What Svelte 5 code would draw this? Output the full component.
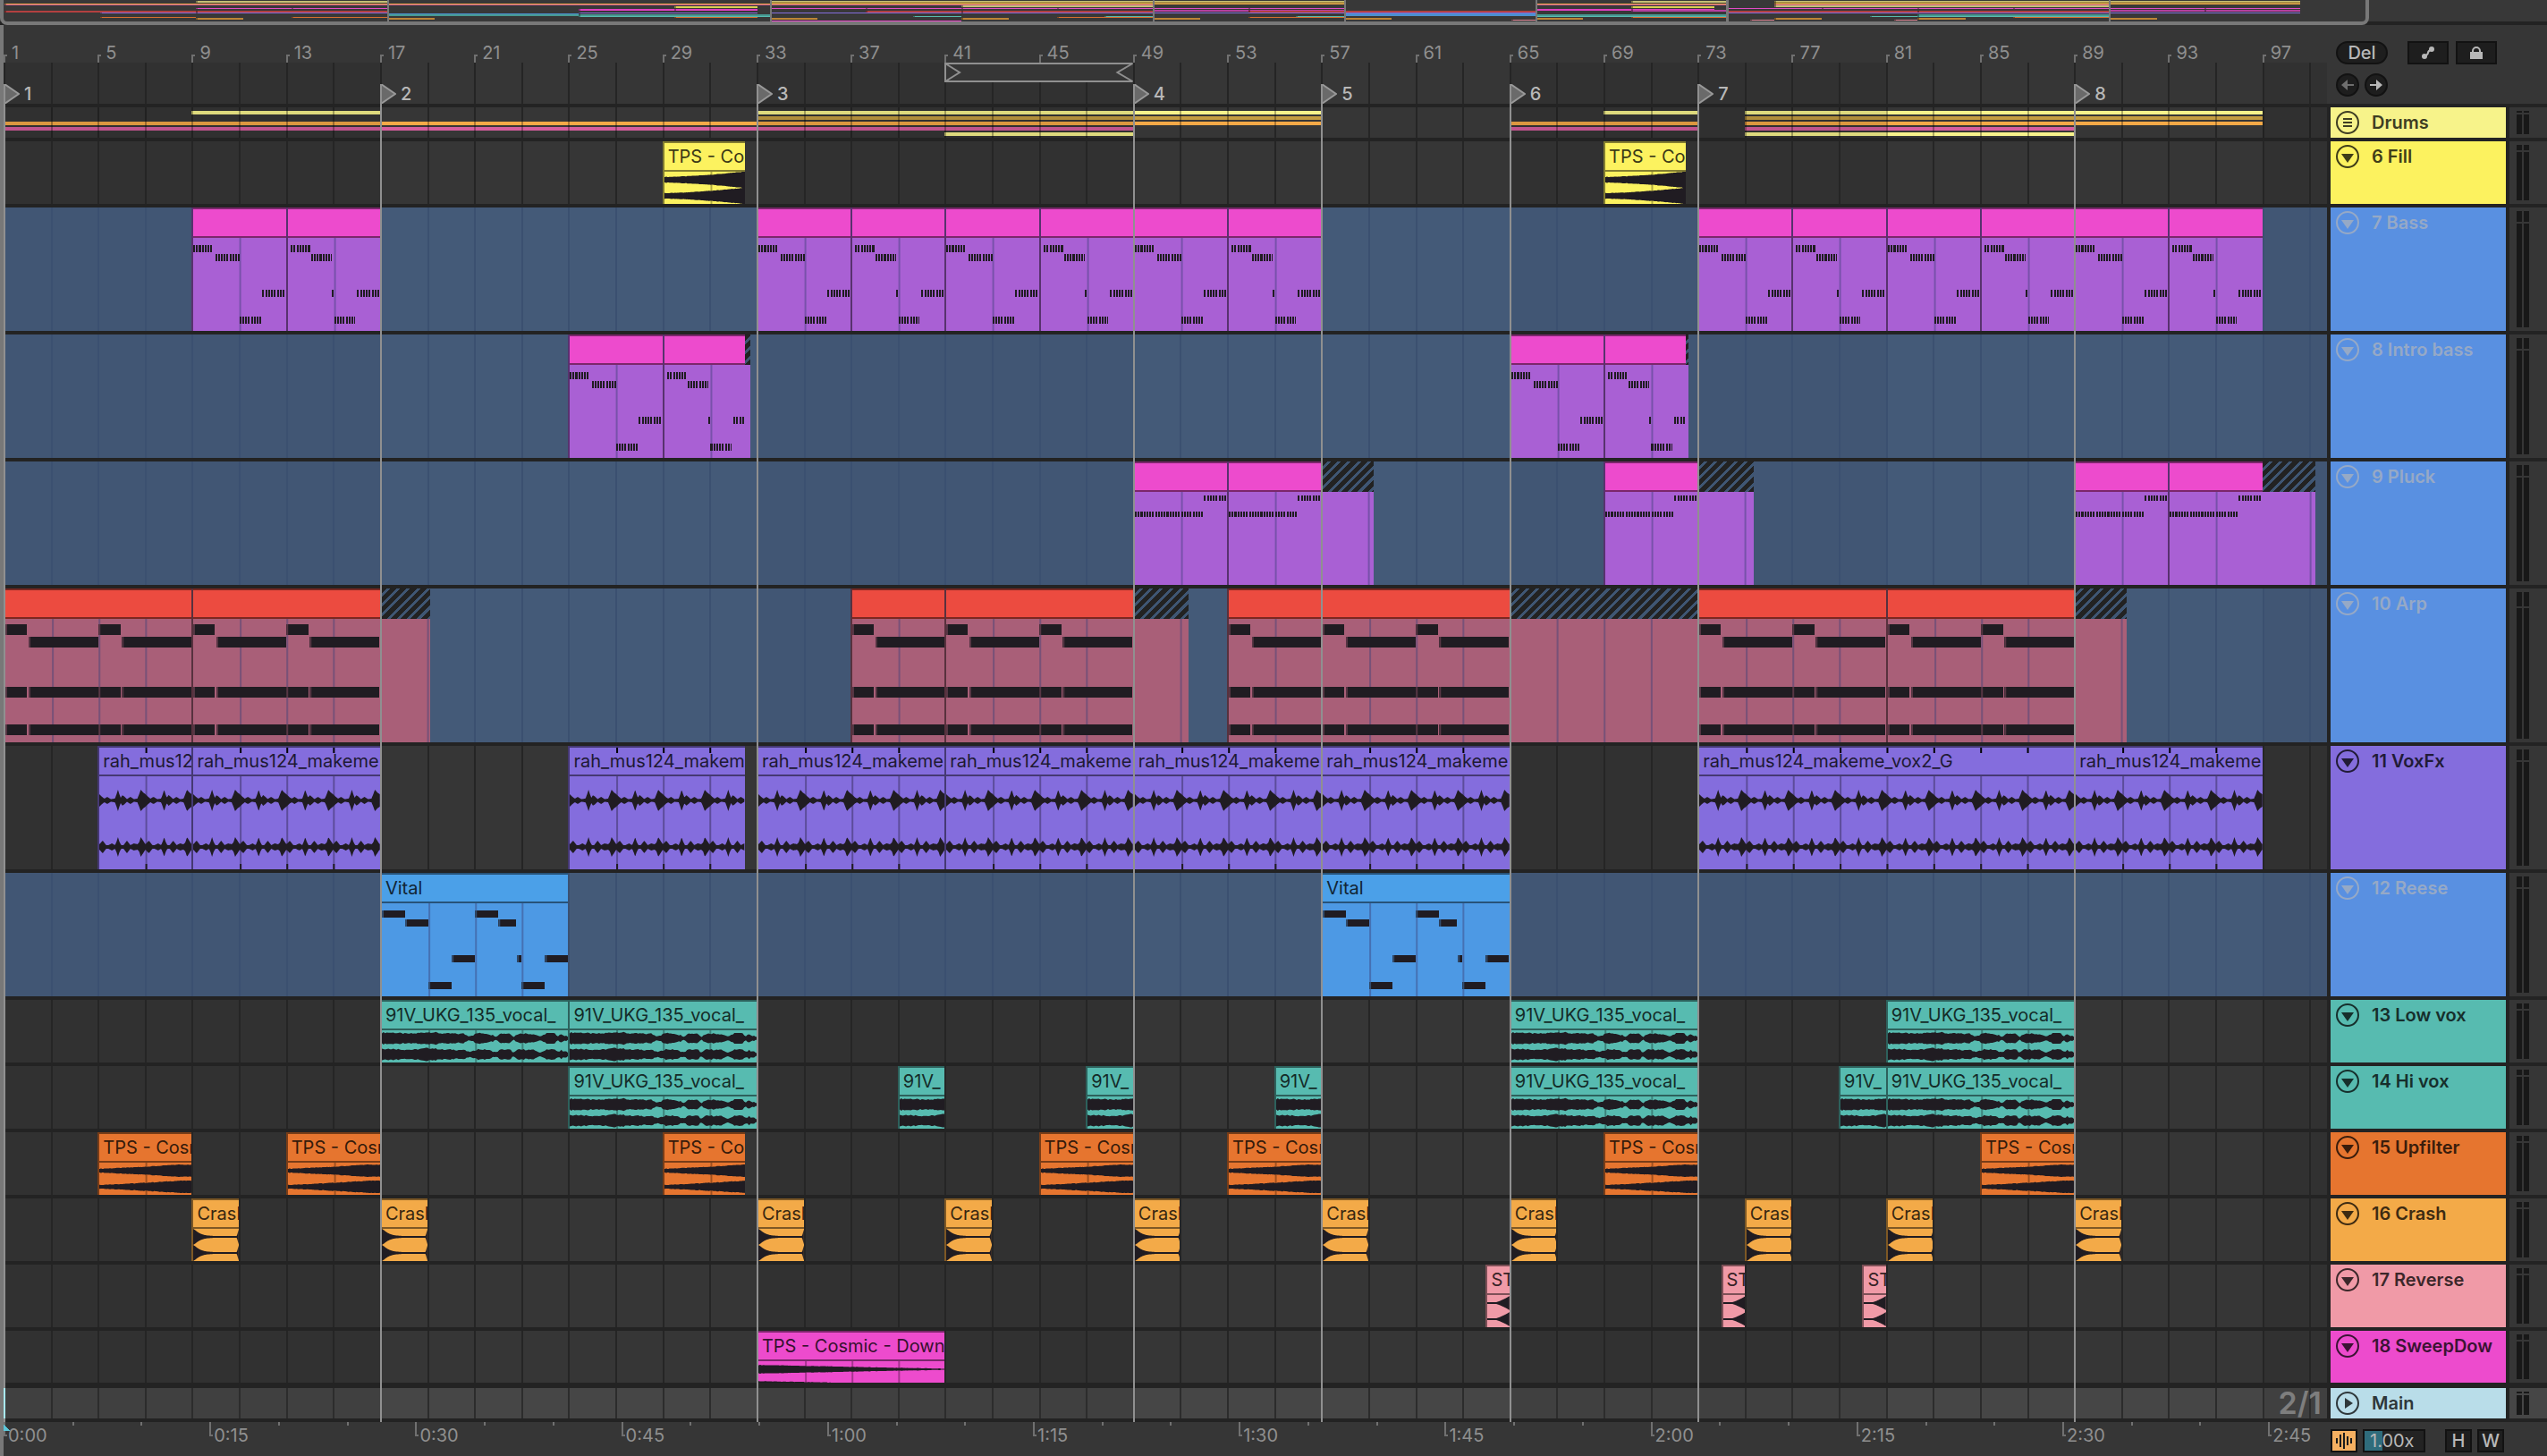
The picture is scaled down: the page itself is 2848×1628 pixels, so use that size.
<script>
  // the timeline is divided in eighths of a bar
  const STEPS = 790;
  const BARS = STEPS / 8;
  const PX = 26.3; // rough width of one bar, only used for line thickness
  const LINE = 2 / PX;

  const locators = [1, 17, 33, 49, 57, 65, 73, 89];
  const rulerBars = Array.from({ length: 25 }, (_, i) => 1 + i * 4);
  const cellBars = Array.from({ length: 50 }, (_, i) => 1 + i * 2);
  const times = Array.from({ length: 12 }, (_, i) => i * 15);

  const PINK = '#ed4bcd';
  const PURPLE = '#a960d4';

  const tracks = [
    { name: '6 Fill', h: 70, color: '#fcf25f', kind: 'fill', meter: 6,
      clips: [[29, 32.5], [69, 72.5]] },
    { name: '7 Bass', h: 138, color: PINK, body: PURPLE, blue: true, kind: 'bass', meter: 12,
      clips: [[9, 13], [13, 17, 1], [33, 37], [37, 41, 1], [41, 45], [45, 49, 1], [49, 53], [53, 57, 1],
        [73, 77], [77, 81, 1], [81, 85], [85, 89, 1], [89, 93], [93, 97, 1]] },
    { name: '8 Intro bass', h: 138, color: PINK, body: PURPLE, blue: true, kind: 'bass', meter: 12,
      clips: [[25, 29], [29, 32.5, 1], [65, 69], [69, 72.5, 1]], tails: [[32.5, 32.75], [72.5, 72.625]] },
    { name: '9 Pluck', h: 138, color: PINK, body: PURPLE, blue: true, kind: 'pluck', meter: 12,
      clips: [[49, 53], [53, 57], [69, 73], [89, 93], [93, 97]], tails: [[57, 59.25], [73, 75.375], [97, 99.25]] },
    { name: '10 Arp', h: 172, color: '#ec4b40', body: '#a95f78', blue: true, kind: 'arp', meter: 16,
      clips: [[1, 9], [9, 17], [37, 41], [41, 49], [53, 57], [57, 65], [73, 81], [81, 89]],
      tails: [[17, 19.125], [49, 51.375], [65, 73], [89, 91.25]] },
    { name: '11 VoxFx', h: 138, color: '#846ddd', kind: 'vox', meter: 12,
      clips: [[5, 9], [9, 17], [25, 32.5], [33, 41], [41, 49], [49, 57], [57, 65], [73, 89], [89, 97]] },
    { name: '12 Reese', h: 138, color: '#4ba0e8', body: '#4d99e4', blue: true, kind: 'reese', meter: 12,
      clips: [[17, 25], [57, 65]] },
    { name: '13 Low vox', h: 70, color: '#57bbb0', kind: 'vocal', meter: 6,
      clips: [[17, 25], [25, 33], [65, 73], [81, 89]] },
    { name: '14 Hi vox', h: 70, color: '#57bbb0', kind: 'vocal', meter: 6,
      clips: [[25, 33], [39, 41], [47, 49], [55, 57], [65, 73], [79, 81], [81, 89]] },
    { name: '15 Upfilter', h: 70, color: '#e6752f', kind: 'up', meter: 6,
      clips: [[5, 9], [13, 17], [29, 32.5], [45, 49], [53, 57], [69, 73], [85, 89]] },
    { name: '16 Crash', h: 70, color: '#f3aa48', kind: 'crash', meter: 6,
      clips: [[9, 11], [17, 19], [33, 35], [41, 43], [49, 51], [57, 59], [65, 67], [75, 77], [81, 83], [89, 91]] },
    { name: '17 Reverse', h: 70, color: '#f09aa7', kind: 'reverse', meter: 6,
      clips: [[64, 65], [74, 75], [80, 81]] },
    { name: '18 SweepDow', h: 58, color: PINK, kind: 'sweep', meter: 6,
      clips: [[33, 41]] }
  ];

  const labels = {
    reese: 'Vital',
    crash: 'Crash',
    reverse: 'ST',
    sweep: 'TPS - Cosmic - Downf'
  };

  // clip names get shorter with the clip
  function label(kind, len) {
    if (kind === 'fill' || kind === 'up') return len < 4 ? 'TPS - Cos' : 'TPS - Cosm';
    if (kind === 'vocal') return len < 4 ? '91V_' : '91V_UKG_135_vocal_';
    if (kind === 'vox') {
      if (len > 8) return 'rah_mus124_makeme_vox2_G';
      return len > 4 ? 'rah_mus124_makeme' : 'rah_mus12';
    }
    return labels[kind] ?? '';
  }

  const drums = [
    { y: 4, color: '#f8f38c', spans: [[9, 17], [33, 57], [69, 73], [75, 97]] },
    { y: 10, color: '#c59d42', spans: [[33, 57], [75, 97]] },
    { y: 16, color: '#f5a947', spans: [[1, 57], [65, 73], [75, 97]] },
    { y: 22, color: '#d65d9e', spans: [[1, 49], [65, 73], [75, 89]] },
    { y: 28, color: '#f8f38c', spans: [[41, 49], [75, 89]] }
  ];

  // rows of the overview strip: y, height, colour, spans
  const overview = [
    [1, 2, '#c5bf74', drums[0].spans],
    [2, 2, '#a98d42', drums[1].spans],
    [4, 1, '#f5a947', drums[2].spans],
    [5, 1, '#c45a95', drums[3].spans],
    [6, 2, '#c5bf74', drums[4].spans],
    [7, 2, '#d8cf52', tracks[0].clips],
    [9, 1, '#e24bc5', tracks[1].clips],
    [10, 2, '#e03fc2', tracks[2].clips],
    [11, 2, '#b53fa0', tracks[3].clips],
    [12, 2, '#b34040', tracks[4].clips],
    [14, 1, '#846ddd', tracks[5].clips],
    [15, 3, '#4b8fd0', tracks[6].clips],
    [16, 2, '#479a92', tracks[7].clips],
    [18, 1, '#57bbb0', tracks[8].clips],
    [19, 1, '#d56f30', tracks[9].clips],
    [20, 2, '#bd8436', tracks[10].clips],
    [22, 1, '#e08a98', tracks[11].clips],
    [23, 1, '#ed4bcd', tracks[12].clips]
  ];

  const bass = [
    [[0, 0.9, 8], [0.95, 2, 18], [2, 3, 88], [3, 4, 58]],
    [[0.12, 1, 8], [1, 1.9, 18], [1.9, 2, 58], [2, 2.9, 88], [3, 4, 58]]
  ];
  const reese = [[0, 1, 8], [1, 2, 18], [2, 3, 88], [3, 4, 58], [4, 5, 8], [5, 5.75, 18], [5.8, 6, 58], [6, 7, 88], [7, 8, 58]];

  function col(a, b) {
    return `grid-column: ${Math.round((a - 1) * 8) + 1} / ${Math.round((b - 1) * 8) + 1}`;
  }

  // short repeated notes between a and b
  function ticks(a, b, y, h) {
    const out = [];
    for (let x = a; x < b - 0.02; x += 0.125) {
      out.push([x, Math.min(0.08, b - x), y, h]);
    }
    return out;
  }

  function notes(kind, len, variant) {
    if (kind === 'bass') {
      return bass[variant].flatMap(([a, b, y]) => ticks(a, b, y, 8));
    }
    if (kind === 'pluck') {
      return [...ticks(0, 3, 22, 6), ...ticks(3, 4, 4, 6)];
    }
    if (kind === 'reese') {
      return reese.map(([a, b, y]) => [a, b - a, y, 8]);
    }
    if (kind === 'arp') {
      const out = [];
      for (let x = 0; x < len; x += 4) {
        out.push([x, 0.94, 6, 12], [x + 1, 3, 20, 12]);
        for (const y of [76, 118]) {
          out.push([x, 0.94, y, 12], [x + 1, 3, y, 12]);
        }
      }
      return out;
    }
    return [];
  }

  const voxA = [[0, 7], [0.12, 4], [0.22, 2], [0.35, 4], [0.5, 1.5], [0.68, 2], [0.75, 7], [0.81, 12], [0.87, 7], [0.93, 3],
    [1, 6], [1.1, 4], [1.2, 1.5], [1.35, 4], [1.5, 1.5], [1.65, 2], [1.73, 7], [1.8, 12], [1.9, 9], [2, 7]];
  const voxB = [[0, 3], [0.15, 7], [0.3, 2], [0.4, 2], [0.55, 4], [0.68, 2], [0.75, 6], [0.81, 11], [0.87, 6], [0.95, 2],
    [1.05, 2], [1.2, 7], [1.35, 2], [1.5, 4], [1.65, 3], [1.73, 5], [1.8, 11], [1.9, 7], [2, 3]];

  function at(points, x) {
    for (let i = 1; i < points.length; i++) {
      if (x <= points[i][0]) {
        const [x0, y0] = points[i - 1];
        const [x1, y1] = points[i];
        return y0 + ((y1 - y0) * (x - x0)) / (x1 - x0);
      }
    }
    return points[points.length - 1][1];
  }

  function noise(i) {
    const v = Math.sin(i * 12.9898) * 43758.5453;
    return v - Math.floor(v);
  }

  const vocalShape = [[0, 6], [0.5, 6], [0.9, 5], [1.4, 5], [1.9, 6.5], [2.2, 6.5], [2.6, 5], [3, 5], [3.3, 4.5], [3.5, 5], [3.7, 2.5],
    [3.9, 3], [4.1, 5.5], [4.5, 5], [4.9, 2], [5.1, 5], [5.5, 5], [5.66, 1.5], [5.85, 5], [6.2, 5], [6.5, 4.5], [6.85, 1.5],
    [7.05, 5.5], [7.4, 5], [7.55, 2.5], [7.7, 4.5], [7.8, 1.5], [7.88, 4], [8, 1]];

  function amp(kind, x, ch) {
    const n = noise(Math.round(x * 13) + ch * 71);
    if (kind === 'vox') return at(ch ? voxB : voxA, x % 2);
    if (kind === 'vocal') return at(vocalShape, x) + n * 1.5 - 0.4;
    if (kind === 'fill') return 3 + (x / 3.5) ** 1.6 * 6 + n * 0.4;
    if (kind === 'up') return Math.min(2 + (x / 3.4) ** 1.3 * 4.4, 6.5) + n * 0.6;
    if (kind === 'crash') return x > 1.93 ? 1 + (x - 1.93) * 90 : 1 + 8 * Math.exp(-((x / 0.3) ** 1.3));
    if (kind === 'reverse') return 1 + 6.5 * Math.max(0, (x - 0.4) / 0.6) ** 1.3;
    return 4.6 - x * 0.52 + n * 0.4;
  }

  function wave(kind, len, ch) {
    const mid = kind === 'vox' ? [27, 79][ch] : [9, 27][ch];
    const step = kind === 'vocal' ? 0.07 : 0.03;
    const up = [];
    const down = [];
    for (let x = 0; x <= len + step; x += step) {
      const a = Math.min(amp(kind, x, ch), kind === 'vox' ? 12 : 9);
      up.push(`${x.toFixed(2)} ${(mid - a).toFixed(1)}`);
      down.unshift(`${x.toFixed(2)} ${(mid + a).toFixed(1)}`);
    }
    return `M${up.join('L')}L${down.join('L')}Z`;
  }

  const audio = ['fill', 'vox', 'vocal', 'up', 'crash', 'reverse', 'sweep'];

  // grid lines that fall inside a clip, relative to its start
  function inner(a, b) {
    return cellBars.filter((n) => n > a && n < b).map((n) => n - a);
  }

  function clock(s) {
    return `${Math.floor(s / 60)}:${String(s % 60).padStart(2, '0')}`;
  }

  let speed = $state('1.00x');
</script>

{#snippet cells()}
  {#each cellBars as bar}
    <i class="cell" class:dim={Math.floor((bar - 1) / 16) % 2 === 0} style={col(bar, Math.min(bar + 2, BARS + 1))}></i>
  {/each}
{/snippet}

{#snippet meter(h)}
  <div class="meter" style="--peak: {h}px">
    <i></i><i></i><i></i><i></i>
  </div>
{/snippet}

{#snippet fold()}
  <svg width="26" height="26" viewBox="0 0 26 26">
    <circle cx="13" cy="13" r="12" fill="none" stroke="currentColor" stroke-width="2" />
    <path d="M6 10h14L13 20z" fill="currentColor" />
  </svg>
{/snippet}

<div class="app">
  <div class="overview">
    <svg class="mini" viewBox="-0.19 0 106.5 24" preserveAspectRatio="none" shape-rendering="crispEdges">
      {#each overview as [y, h, color, spans]}
        {#each spans as [a, b]}
          <rect x={a - 1} {y} width={b - a} height={h} fill={color} />
          <rect x={a - 1} {y} width={LINE} height={h} fill="#000" opacity="0.35" />
        {/each}
      {/each}
      {#each locators.slice(1) as bar}
        <rect x={bar - 1} y="0" width={LINE} height="24" fill="#787878" />
      {/each}
    </svg>
    <div class="frame"></div>
  </div>

  <div class="arrangement">
    <div class="row top">
      <div class="rulers">
        <div class="ruler">
          <svg class="marks" viewBox="0 0 {BARS} 42" preserveAspectRatio="none" shape-rendering="crispEdges">
            {#each rulerBars as bar}
              <rect x={bar - 1} y="30" width={LINE} height="12" />
              <rect x={bar - 1} y="30" width={LINE * 2} height="2" />
              <rect x={bar + 1} y="40" width={LINE} height="2" />
            {/each}
          </svg>
          {#each rulerBars as bar}
            <span class="bar-no" style={col(bar, Math.min(bar + 4, BARS + 1))}>{bar}</span>
          {/each}
        </div>
        <div class="scrub lane">
          {@render cells()}
          <svg class="loop" style={col(41, 49)} width="100%" height="22">
            <rect x="1" y="1" width="100%" height="20" fill="#363636" />
            <path d="M1 1L17 11L1 21" />
            <svg x="100%" overflow="visible"><path d="M0 1L-17 11L0 21" /></svg>
            <rect class="edge" width="100%" height="2" />
            <rect class="edge" y="20" width="100%" height="2" />
            <rect class="edge" width="2" height="22" />
          </svg>
          {#each locators as bar, i}
            <div class="locator" style={col(bar, bar + 6)}>
              <svg width="18" height="22" viewBox="0 0 18 22"><path d="M1 0L17 11L1 22z" fill="#6a6a6a" stroke="#999" stroke-width="2" /></svg>
              <span>{i + 1}</span>
            </div>
          {/each}
        </div>
      </div>
      <div class="controls">
        <div class="line">
          <button class="pill">Del</button>
          <button class="box first" aria-label="Automation mode">
            <svg width="20" height="20" viewBox="0 0 20 20" fill="#b8b8b8">
              <circle cx="6" cy="14" r="3" /><circle cx="14" cy="6" r="3" />
              <path d="M6 14Q10 12 10 10Q10 8 14 6" fill="none" stroke="#b8b8b8" stroke-width="2" />
            </svg>
          </button>
          <button class="box" aria-label="Lock envelopes">
            <svg width="20" height="20" viewBox="0 0 20 20">
              <path d="M3 9h14v8H3z" fill="#b8b8b8" />
              <path d="M6 10V8a4 4 0 0 1 8 0v2" fill="none" stroke="#b8b8b8" stroke-width="2" />
            </svg>
          </button>
        </div>
        <div class="line">
          <button class="round off" aria-label="Previous locator">
            <svg width="16" height="14" viewBox="0 0 16 14"><path d="M8 1v5h7v2H8v5L1 7z" fill="currentColor" /></svg>
          </button>
          <button class="round" aria-label="Next locator">
            <svg width="16" height="14" viewBox="0 0 16 14"><path d="M8 1v5H1v2h7v5l7-6z" fill="currentColor" /></svg>
          </button>
        </div>
      </div>
    </div>

    <div class="row">
      <div class="lane drums">
        <svg class="strips" viewBox="0 0 {BARS} 34" preserveAspectRatio="none" shape-rendering="crispEdges">
          {#each drums as strip}
            {#each strip.spans as [a, b]}
              <rect x={a - 1} y={strip.y} width={b - a} height="4" fill={strip.color} />
            {/each}
          {/each}
        </svg>
        {@render cells()}
      </div>
      <button class="name" style="--color: #f7f38a">
        <svg width="26" height="26" viewBox="0 0 26 26" fill="none" stroke="currentColor" stroke-width="2">
          <circle cx="13" cy="13" r="12" />
          <path d="M8 9h10M8 13h10M8 17h10" />
        </svg>
        Drums
      </button>
      {@render meter(2)}
    </div>

    {#each tracks as track}
      <div class="row">
        <div class="lane" class:blue={track.blue} style="--h: {track.h}px; --color: {track.color}; --body: {track.body ?? track.color}">
          {@render cells()}
          {#each track.clips as [a, b, variant = 0]}
            <div class="clip" style={col(a, b)}>
              <div class="head">
                {#if track.kind === 'vox'}
                  <svg class="warp" viewBox="0 0 {b - a} 6" preserveAspectRatio="none">
                    {#each inner(a, b) as x}
                      <rect {x} y="0" width={LINE} height="6" />
                    {/each}
                  </svg>
                {/if}
                {label(track.kind, b - a)}
              </div>
              <svg class="body" viewBox="0 0 {b - a} {track.h - 34}" preserveAspectRatio="none">
                {#each inner(a, b) as x}
                  <rect class="grid-line" {x} y="0" width={LINE} height={track.h - 34} />
                  {#if track.kind === 'vox'}
                    <rect {x} y="98" width={LINE} height="6" />
                  {/if}
                {/each}
                {#each notes(track.kind, b - a, variant) as [x, w, y, h]}
                  <rect {x} {y} width={w} height={h} shape-rendering="crispEdges" />
                  {#if w > 0.1}
                    <rect class="cut" {x} {y} width={LINE} height={h} />
                  {/if}
                {/each}
                {#if audio.includes(track.kind)}
                  <path d={wave(track.kind, b - a, 0)} />
                  <path d={wave(track.kind, b - a, 1)} />
                {/if}
              </svg>
            </div>
          {/each}
          {#each track.tails ?? [] as [a, b]}
            <div class="clip tail" style={col(a, b)}>
              <div class="hatch"></div>
              <svg class="body" viewBox="0 0 {b - a} {track.h - 34}" preserveAspectRatio="none">
                {#each inner(a, b) as x}
                  <rect class="grid-line" {x} y="0" width={LINE} height={track.h - 34} />
                {/each}
              </svg>
            </div>
          {/each}
        </div>
        <button class="name" class:muted={track.blue} style="--color: {track.blue ? '#5990e1' : track.color}">
          {@render fold()}
          {track.name}
        </button>
        {@render meter(track.meter)}
      </div>
    {/each}

    <div class="row main">
      <div class="lane">
        {@render cells()}
        <i class="start" style={col(1, 2)}></i>
        <span class="fraction">2/1</span>
      </div>
      <button class="name" style="--color: #b9dde9">
        <svg width="26" height="26" viewBox="0 0 26 26">
          <circle cx="13" cy="13" r="12" fill="none" stroke="currentColor" stroke-width="2" />
          <path d="M10 7v12l9-6z" fill="currentColor" />
        </svg>
        Main
      </button>
      {@render meter(2)}
    </div>

    <div class="row bottom">
      <div class="ruler time">
        <svg class="marks" viewBox="0 0 {BARS} 38" preserveAspectRatio="none" shape-rendering="crispEdges">
          {#each times as s}
            <rect x={(s * 7) / 12} y="0" width={LINE} height="16" />
            <rect x={(s * 7) / 12} y="14" width={LINE * 2} height="2" />
            <rect x={((s + 5) * 7) / 12} y="0" width={LINE} height="4" />
            <rect x={((s + 10) * 7) / 12} y="0" width={LINE} height="4" />
          {/each}
          <path class="insert" d="M0 2L0.3 10H0z" />
        </svg>
        {#each times as s, i}
          <span style="grid-column: {i * 70 + 1} / {Math.min(i * 70 + 71, STEPS + 1)}">{clock(s)}</span>
        {/each}
      </div>
      <div class="zoom">
        <button class="wave-btn" aria-label="Optimize waveform">
          <svg width="22" height="20" viewBox="0 0 22 20" stroke="#1c1c1c" stroke-width="2">
            <path d="M3 7v6M7 3v14M11 1v18M15 5v10M19 7v6" />
          </svg>
        </button>
        <input aria-label="Playback speed" bind:value={speed} />
        <button class="fit h">H</button>
        <button class="fit">W</button>
      </div>
    </div>

    <div class="song-lines">
      {#each locators as bar}
        <i style={col(bar, bar + 1)}></i>
      {/each}
    </div>
  </div>
</div>

<style>
  :global(body) {
    margin: 0;
    background: #363636;
  }
  .app {
    font-family: Inter, "Liberation Sans", sans-serif;
    font-size: 20px;
    line-height: 30px;
    background: #363636;
    overflow: hidden;
  }
  button,
  input {
    font: inherit;
    margin: 0;
    padding: 0;
    box-sizing: border-box;
  }
  svg {
    display: block;
    flex: none;
  }

  /* overview */
  .overview {
    position: relative;
    height: 24px;
    border-bottom: 4px solid #232323;
    background: #383838;
  }
  .mini {
    width: 100%;
    height: 24px;
  }
  .frame {
    position: absolute;
    left: 0;
    top: -12px;
    bottom: -4px;
    width: 93%;
    box-sizing: border-box;
    border: 4px solid #787878;
    border-radius: 8px;
  }

  .arrangement {
    position: relative;
    border-left: 4px solid #787878;
    background: #232323;
    display: flex;
    flex-direction: column;
    gap: 4px;
  }
  .row {
    display: grid;
    grid-template-columns: minmax(0, 1fr) 196px 42px;
    column-gap: 4px;
  }
  .row.top,
  .row.bottom {
    grid-template-columns: minmax(0, 1fr) 242px;
    background: #363636;
  }
  .ruler,
  .lane,
  .song-lines {
    display: grid;
    grid-template-columns: repeat(790, minmax(0, 1fr));
  }
  .ruler {
    position: relative;
    height: 42px;
    color: #8f8f8f;
  }
  .marks {
    grid-column: 1 / -1;
    grid-row: 1;
    width: 100%;
    height: 100%;
    fill: #707070;
  }
  .ruler span {
    grid-row: 1;
    white-space: nowrap;
  }
  .bar-no {
    padding: 16px 0 0 9px;
  }

  .lane {
    position: relative;
    grid-template-rows: var(--h, auto);
    background: #363636;
    overflow: hidden;
  }
  .lane.blue {
    background: #445a78;
  }
  .cell {
    grid-row: 1;
    border-left: 2px solid #252525;
  }
  .cell.dim {
    background: rgba(0, 0, 0, 0.08);
  }
  .blue .cell {
    border-color: #3b5070;
  }
  .blue .cell.dim {
    background: rgba(10, 30, 60, 0.06);
  }

  .scrub {
    grid-template-rows: 46px;
  }
  .loop {
    grid-row: 1;
    fill: none;
    stroke: #909090;
    stroke-width: 2px;
  }
  .loop rect {
    stroke: none;
  }
  .loop .edge {
    fill: #909090;
  }
  .locator {
    grid-row: 1;
    display: flex;
    align-items: center;
    align-self: end;
    gap: 5px;
    height: 22px;
    color: #b8b8b8;
    font-weight: 500;
    white-space: nowrap;
  }

  .drums {
    grid-template-rows: 34px;
  }
  .strips {
    grid-column: 1 / -1;
    grid-row: 1;
    width: 100%;
    height: 34px;
  }
  .drums .cell {
    z-index: 1;
    border-color: rgba(0, 0, 0, 0.3);
  }
  .drums .cell.dim {
    background: rgba(0, 0, 0, 0.1);
  }

  /* clips */
  .clip {
    grid-row: 1;
    display: flex;
    flex-direction: column;
    overflow: hidden;
    z-index: 1;
    background: var(--body);
    border-left: 2px solid color-mix(in srgb, var(--color), #000 48%);
  }
  .blue .clip {
    border-left-color: color-mix(in srgb, var(--body), #000 48%);
  }
  .head {
    position: relative;
    height: 30px;
    padding-left: 4px;
    border-top: 2px solid color-mix(in srgb, var(--color), #000 48%);
    border-bottom: 2px solid color-mix(in srgb, var(--color), #000 48%);
    background: var(--color);
    color: color-mix(in srgb, var(--color), #000 77%);
    white-space: nowrap;
    overflow: hidden;
  }
  .warp {
    position: absolute;
    left: 0;
    top: 0;
    width: 100%;
    height: 6px;
  }
  .body {
    width: 100%;
    flex: 1;
    min-height: 0;
    fill: #201c22;
  }
  .grid-line {
    fill: rgba(0, 0, 0, 0.3);
  }
  .blue .grid-line {
    fill: rgba(60, 65, 120, 0.45);
  }
  .cut {
    fill: var(--body);
    opacity: 0.4;
  }
  .clip.tail {
    border-left: 0;
    background: none;
  }
  .tail .body {
    background: var(--body);
  }
  .hatch {
    height: 34px;
    background: repeating-linear-gradient(135deg, #222 0 5px, #3f5673 5px 8px);
  }

  /* track names */
  .name {
    display: flex;
    align-items: flex-start;
    gap: 14px;
    padding: 4px 0 0 6px;
    border: 0;
    background: var(--color);
    color: color-mix(in srgb, var(--color), #000 75%);
    font-weight: 600;
    line-height: 26px;
    text-align: left;
    white-space: nowrap;
    overflow: hidden;
  }
  .name.muted {
    color: #96a9c6;
  }
  .meter {
    display: grid;
    grid-template-columns: 6px 6px;
    grid-template-rows: var(--peak) minmax(0, 1fr);
    gap: 2px;
    padding: 4px 8px;
    background: #363636;
  }
  .meter i {
    background: #181818;
  }

  /* top right buttons */
  .controls {
    display: flex;
    flex-direction: column;
    gap: 10px;
    padding: 18px 0 8px 6px;
  }
  .line {
    display: flex;
    gap: 6px;
  }
  .controls button,
  .fit {
    display: flex;
    align-items: center;
    justify-content: center;
    height: 26px;
    border: 2px solid #121212;
    background: #1e1e1e;
    color: #b8b8b8;
    line-height: 22px;
  }
  .controls .pill {
    width: 58px;
    border-radius: 13px;
    font-weight: 500;
  }
  .controls .box {
    width: 46px;
    margin-left: 2px;
  }
  .controls .box.first {
    margin-left: 16px;
  }
  .controls .round {
    width: 26px;
    border-radius: 13px;
  }
  .controls .off {
    color: #6e6e6e;
  }

  .row.main {
    margin-top: 2px;
  }
  .main .lane,
  .main .meter {
    background: #464646;
  }
  .main .lane {
    grid-template-rows: 34px;
  }
  .main .cell {
    border-color: #2c2c2c;
  }
  .start {
    grid-row: 1;
    z-index: 3;
    border-left: 2px solid #a8e8f0;
  }
  .fraction {
    position: absolute;
    right: 6px;
    top: 0;
    font-size: 34px;
    line-height: 34px;
    font-weight: 600;
    color: #7e7e7e;
  }

  .row.bottom {
    height: 38px;
  }
  .ruler.time {
    height: 38px;
    overflow: hidden;
  }
  .time span {
    padding-left: 5px;
  }
  .insert {
    fill: #5cc5d8;
  }
  .zoom {
    display: flex;
    gap: 6px;
    padding-top: 8px;
  }
  .wave-btn {
    display: flex;
    align-items: center;
    justify-content: center;
    width: 30px;
    height: 26px;
    border: 2px solid #121212;
    background: #f5b061;
  }
  .zoom input {
    width: 70px;
    height: 26px;
    padding-left: 6px;
    border: 2px solid #121212;
    background: linear-gradient(90deg, #2f6c7c 20px, #232323 20px);
    color: #b8b8b8;
  }
  .fit {
    width: 30px;
    font-weight: 500;
  }
  .fit.h {
    margin-left: 16px;
  }

  .song-lines {
    position: absolute;
    left: 0;
    right: 246px;
    top: 66px;
    bottom: 38px;
    z-index: 2;
    pointer-events: none;
  }
  .song-lines i {
    grid-row: 1;
    border-left: 2px solid #909090;
  }
</style>
